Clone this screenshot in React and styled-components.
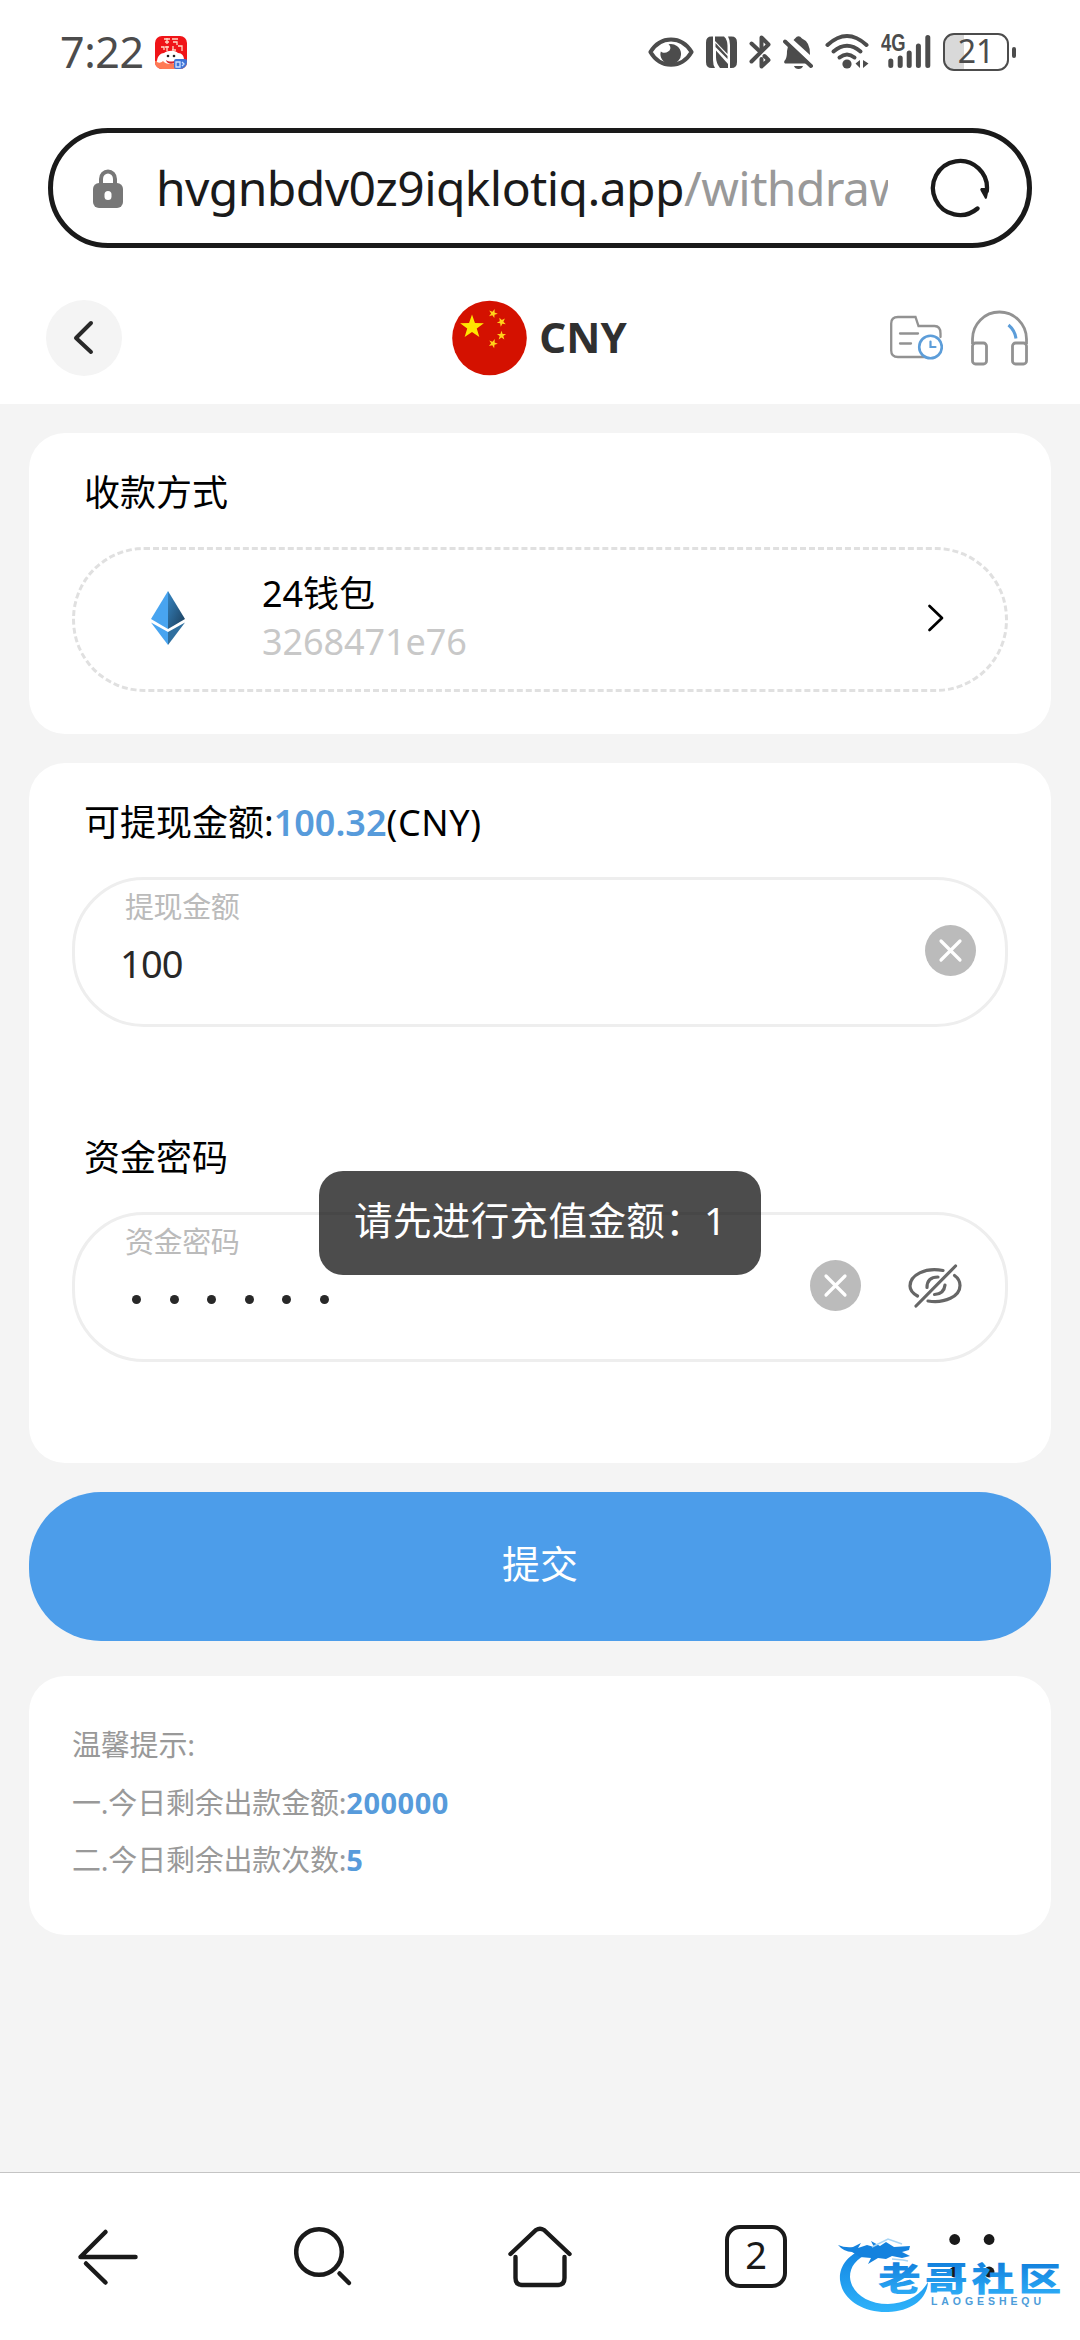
import React from 'react';
import styled, { createGlobalStyle } from 'styled-components';


const GlobalStyle = createGlobalStyle`
  * {
    box-sizing: border-box;
  }

  body {
    margin: 0;
    background: #f4f4f4;
    font-family: 'Noto Sans', 'Noto Sans CJK SC', sans-serif;
    color: #000;
  }

  svg {
    display: block;
    flex: none;
  }
`;

const Screen = styled.div`
  position: relative;
  display: flex;
  flex-direction: column;
  width: 1080px;
  height: 2340px;
  overflow: hidden;
  background: #f4f4f4;
`;

/* ---------- status bar ---------- */

const StatusBar = styled.div`
  display: flex;
  align-items: center;
  height: 104px;
  padding: 0 64px 0 60px;
  background: #fff;
  color: #4c4c4c;
`;

const Clock = styled.span`
  width: 95px;
  font-size: 43px;
  line-height: 50px;
  letter-spacing: -0.4px;
  white-space: nowrap;
`;

const StatusIcons = styled.div`
  display: flex;
  align-items: center;
  gap: 12px;
  margin-left: auto;
`;

const Signal = styled.div`
  position: relative;
`;

const NetworkType = styled.span`
  position: absolute;
  left: 0;
  top: 1px;
  font-family: 'Liberation Sans', sans-serif;
  font-size: 23px;
  font-weight: bold;
  line-height: 21px;
  transform: scaleX(0.8);
  transform-origin: left;
`;

const Battery = styled.div`
  display: flex;
  align-items: center;
  gap: 3px;
`;

const BatteryBody = styled.div`
  width: 66px;
  height: 38px;
  border: 2.5px solid #4c4c4c;
  border-radius: 11px;
  background: #fff linear-gradient(#d9d9d9, #d9d9d9) no-repeat left / ${(props) => props.$level}% 100%;
  font-size: 32px;
  line-height: 32px;
  text-align: center;
`;

const BatteryCap = styled.div`
  width: 4px;
  height: 11px;
  border-radius: 2px;
  background: #4c4c4c;
`;

/* ---------- browser ---------- */

const BrowserBar = styled.div`
  padding: 24px 48px 0;
  background: #fff;
`;

const AddressBox = styled.div`
  display: flex;
  align-items: center;
  height: 120px;
  padding: 0 37px 0 40px;
  border: 5px solid #1a1a1a;
  border-radius: 60px;
`;

const Address = styled.div`
  width: 732px;
  margin: -1px 42px 0 33px;
  overflow: hidden;
  white-space: nowrap;
  font-size: 48px;
  line-height: 70px;
  letter-spacing: -0.6px;
  color: #1a1a1a;
`;

const AddressPath = styled.span`
  color: #999;
`;

const BottomNav = styled.nav`
  display: grid;
  grid-template-columns: repeat(5, 1fr);
  align-items: center;
  justify-items: center;
  height: 168px;
  margin-top: auto;
  border-top: 1px solid #c4c4c4;
  background: #fff;
`;

const TabCount = styled.div`
  width: 62px;
  height: 63px;
  border: 4.5px solid #1a1a1a;
  border-radius: 15px;
  font-size: 38px;
  line-height: 51px;
  text-align: center;
  color: #1a1a1a;
`;

/* ---------- page header ---------- */

const Header = styled.header`
  display: grid;
  grid-template-columns: 1fr auto 1fr;
  align-items: center;
  height: 156px;
  padding: 24px 52px 0 46px;
  background: #fff;
`;

const BackButton = styled.button`
  display: flex;
  align-items: center;
  justify-content: center;
  width: 76px;
  height: 76px;
  padding: 0;
  border: 0;
  border-radius: 50%;
  background: #f4f4f4;
`;

const Currency = styled.div`
  display: flex;
  align-items: center;
  gap: 12px;
  padding-left: 5px;
  font-size: 42px;
  font-weight: 700;
  line-height: 60px;
  color: #303030;
`;

const CurrencyCode = styled.span`
  margin-top: -2px;
`;

const HeaderActions = styled.div`
  display: flex;
  align-items: center;
  justify-content: flex-end;
  gap: 28px;
`;

/* ---------- content ---------- */

const Content = styled.main`
  display: flex;
  flex-direction: column;
  padding: 29px 29px 0;
`;

const Card = styled.section`
  height: ${(props) => props.$height}px;
  margin-bottom: ${(props) => props.$gap || 0}px;
  padding: ${(props) => props.$padTop || 35}px 43px 0;
  border-radius: 36px;
  background: #fff;
`;

const Title = styled.h2`
  margin: 0 0 0 12px;
  font-size: 36px;
  font-weight: 400;
  line-height: 50px;
`;

const Amount = styled.span`
  font-weight: 600;
  color: #579bdb;
`;

const Unit = styled.span`
  letter-spacing: 0.6px;
`;

const WalletRow = styled.div`
  display: flex;
  align-items: center;
  height: 145px;
  margin-top: 29px;
  padding: 0 61px 3px 76px;
  border: 3px dashed #e0e0e0;
  border-radius: 72px;
`;

const WalletInfo = styled.div`
  flex: 1;
  margin-left: 77px;
  font-size: 36px;
  line-height: 48px;
  letter-spacing: -0.1px;
`;

const WalletNumber = styled.div`
  color: #c8c8c8;
`;

const Field = styled.div`
  display: flex;
  align-items: center;
  height: 150px;
  margin-top: 29px;
  margin-bottom: ${(props) => props.$gap || 0}px;
  padding: 0 ${(props) => props.$padRight}px 0 45px;
  border: 3px solid #eee;
  border-radius: 72px;
`;

const FieldText = styled.div`
  flex: 1;
  align-self: flex-start;
`;

const FieldLabel = styled.div`
  margin: 9px 0 0 5px;
  font-size: 29px;
  line-height: 36px;
  letter-spacing: -0.4px;
  color: #bbb;
`;

const FieldValue = styled.div`
  margin-top: 12px;
  font-size: 38px;
  line-height: 52px;
  letter-spacing: -0.8px;
  color: #282828;
`;

const PasswordDots = styled.div`
  display: flex;
  gap: 28.5px;
  margin: 35px 0 0 12px;
`;

const Dot = styled.span`
  width: 9px;
  height: 9px;
  border-radius: 50%;
  background: #282828;
`;

const FieldIcons = styled.div`
  display: flex;
  align-items: center;
  gap: 46px;
  margin-top: -3px;
`;

const SubmitButton = styled.button`
  height: 149px;
  margin-bottom: 35px;
  padding: 0 0 11px;
  border: 0;
  border-radius: 72px;
  background: #4c9dea;
  color: #fff;
  font-family: inherit;
  font-size: 38px;
`;

const TipLine = styled.p`
  margin: 0;
  font-size: 29px;
  line-height: 57.6px;
  letter-spacing: -0.2px;
  color: #999;
`;

const TipValue = styled.b`
  font-weight: 700;
  letter-spacing: 0.5px;
  color: #579bdb;
`;

const Toast = styled.div`
  position: absolute;
  left: 319px;
  top: 1171px;
  width: 442px;
  height: 104px;
  padding-left: 35px;
  border-radius: 24px;
  background: rgba(0, 0, 0, 0.7);
  color: #fff;
  font-size: 38.5px;
  line-height: 98px;
  letter-spacing: 0.4px;
  white-space: nowrap;
`;

const Watermark = styled.div`
  position: absolute;
  left: 836px;
  top: 2230px;
`;

/* ---------- icons ---------- */

const AppBadge = () => (
  <svg width="32" height="33" viewBox="0 0 32 33">
    <defs>
      <clipPath id="appClip"><rect width="32" height="33" rx="7" /></clipPath>
    </defs>
    <g clipPath="url(#appClip)">
      <rect width="32" height="33" fill="#f01418" />
      <path d="M0 25c10-2 22-2 32 1v7H0z" fill="#ff7a55" />
      <path d="M9 3h6M10 6h4M12 2v6M17 3h6M18 6h4v3M6 11h3v3M10 11h4M12 10v5M17 14h4M18 10v4M23 10h4v5" stroke="#ffd9c4" strokeWidth="1.3" fill="none" />
      <path d="M2 26c0-6 4-9 7-9 4-3 11-3 14 0 4 0 6 3 6 7-2 2-5 1-6 0-3 5-12 5-15 1-2 2-4 2-6 1z" fill="#fff" />
      <circle cx="13" cy="20" r="1.3" fill="#222" />
      <circle cx="19" cy="20" r="1.3" fill="#222" />
      <path d="M11 24c3 2 7 2 10 0-1 5-9 5-10 0z" fill="#d8232a" />
      <rect x="19" y="23" width="13" height="10" rx="2" fill="#3f74d6" />
      <path d="M21 26h4v5h-4zM27 26l2 2-2 2" stroke="#cfe0ff" strokeWidth="1.3" fill="none" />
    </g>
  </svg>
);

const EyeComfortIcon = () => (
  <svg width="46" height="40" viewBox="0 0 46 40">
    <path d="M2.4 20C7.5 11.5 14.5 7.4 23 7.4S38.5 11.5 43.6 20C38.5 28.6 31.5 32.8 23 32.8S7.5 28.6 2.4 20Z" fill="none" stroke="#4c4c4c" strokeWidth="4" strokeLinejoin="round" />
    <path d="M20.5 12.2A10.3 10 0 1 1 12.8 19.4C15.5 22 21.5 20.5 22.3 16.8 22.6 15 22 13.2 20.5 12.2Z" fill="#4c4c4c" />
  </svg>
);

const NfcIcon = () => (
  <svg width="31" height="40" viewBox="0 0 31 40">
    <path d="M7 4.600H5.500Q0 4.600 0 10.500V30Q0 36 5.500 36H9Q7 33 7 28Z" fill="#4c4c4c" />
    <path d="M9 4.600H18Q21.500 8 21.500 14V22L9 9Z" fill="#4c4c4c" />
    <path d="M9.500 11L21.500 24V27L9.500 15Z" fill="#4c4c4c" />
    <path d="M10 18.500L22 32V36H14Q10 31 10 25Z" fill="#4c4c4c" />
    <path d="M24 36H25.500Q31 36 31 30V10.500Q31 4.600 25.500 4.600H22Q24 8 24 13Z" fill="#4c4c4c" />
  </svg>
);

const BluetoothIcon = () => (
  <svg width="22" height="40" viewBox="0 0 22 40" fill="none" stroke="#4c4c4c" strokeWidth="4" strokeLinecap="round" strokeLinejoin="round">
    <path d="M2.500 11.500L11.500 20" />
    <path d="M12.500 17V5.500L19.500 12.500L2.500 29.500" />
    <path d="M12.500 27V34.500L19.500 28L15.500 24" />
  </svg>
);

const MutedBellIcon = () => (
  <svg width="30" height="40" viewBox="0 0 30 40">
    <path d="M12 6.500Q15.500 2 19 6.500Q27.500 10 27 23L10.500 8Z" fill="#4c4c4c" />
    <path d="M5.500 12L25 31.600H2Q0 30 2.500 27.600Q4 25 4 19Z" fill="#4c4c4c" />
    <path d="M2 9.500L28 34" stroke="#4c4c4c" strokeWidth="4" strokeLinecap="round" />
    <path d="M6 8L30 31" stroke="#fff" strokeWidth="1.800" />
    <path d="M11 34H20Q19 37 15.500 37T11 34Z" fill="#4c4c4c" />
  </svg>
);

const WifiIcon = () => (
  <svg width="44" height="40" viewBox="0 0 44 40" fill="none" stroke="#4c4c4c" strokeWidth="4" strokeLinecap="round">
    <path d="M2.500 13Q22 -5 41.500 13" />
    <path d="M8.500 19.500Q22 8 35.500 19.500" />
    <path d="M14.500 25.500Q22 19.500 29.500 25.500" />
    <circle cx="22" cy="32" r="4.600" fill="#4c4c4c" stroke="none" />
    <path d="M35 28V36L30.500 31.500ZM38 36V28L43.500 31.500Z" fill="#4c4c4c" stroke="none" />
  </svg>
);

const SignalIcon = () => (
  <svg width="50" height="40" viewBox="0 0 50 40" stroke="#4c4c4c" strokeWidth="5" strokeLinecap="round">
    <path d="M9.800 29V33.500M19.200 26V33.500M28.200 21V33.500M37.400 14V33.500M46.800 5.500V33.500" />
  </svg>
);

const LockIcon = () => (
  <svg width="30" height="39" viewBox="0 0 30 39">
    <path d="M8 16V10a7 7.500 0 0 1 14 0v6" fill="none" stroke="#777" strokeWidth="4" />
    <rect y="14" width="30" height="25" rx="6" fill="#777" />
    <rect x="11.500" y="22" width="7" height="9" rx="3.500" fill="#fff" />
  </svg>
);

const ReloadIcon = () => (
  <svg width="60" height="60" viewBox="0 0 60 60">
    <path d="M47.500 50.500A27 27 0 1 1 56.800 33" fill="none" stroke="#1a1a1a" strokeWidth="4.300" strokeLinecap="round" />
    <path d="M51 30Q49.500 31.500 50.800 33L55 40.500Q56.500 41.800 57 39.500L59 30Z" fill="#1a1a1a" />
  </svg>
);

const ChevronLeft = () => (
  <svg width="22" height="36" viewBox="0 0 22 36" fill="none" stroke="#282828" strokeWidth="4" strokeLinecap="round" strokeLinejoin="round">
    <path d="M18 3L3 18L18 32" />
  </svg>
);

const ChevronRight = () => (
  <svg width="17" height="30" viewBox="0 0 17 30" fill="none" stroke="#000" strokeWidth="2.700" strokeLinecap="round" strokeLinejoin="round">
    <path d="M2.500 3L15 15L2.500 27" />
  </svg>
);

const star = (cx, cy, r, turn) => {
  const points = [];
  for (let i = 0; i < 10; i++) {
    const radius = i % 2 ? r * 0.4 : r;
    const angle = ((turn + i * 36 - 90) * Math.PI) / 180;
    points.push(`${(cx + radius * Math.cos(angle)).toFixed(2)},${(cy + radius * Math.sin(angle)).toFixed(2)}`);
  }
  return points.join(' ');
};

const FlagIcon = () => (
  <svg width="75" height="76" viewBox="0 0 75 76">
    <circle cx="37.500" cy="38" r="37.300" fill="#d41100" />
    <g fill="#ffe600">
      <polygon points={star(20, 27, 12.5, 0)} />
      <polygon points={star(41, 13.5, 4.8, 20)} fill="#ffd21a" />
      <polygon points={star(49.5, 22, 4.8, 45)} fill="#ffd21a" />
      <polygon points={star(49.5, 35.5, 4.8, 0)} fill="#ffd21a" />
      <polygon points={star(41, 43.5, 4.8, 22)} fill="#ffd21a" />
    </g>
  </svg>
);

const RecordIcon = () => (
  <svg width="53" height="56" viewBox="0 0 53 56" fill="none" stroke="#929292" strokeWidth="2.300" strokeLinecap="round">
    <path d="M50.500 27V23.500Q50.500 16 44.500 16H28.500L25.500 7H8Q1.200 7 1.200 13.500V40.500Q1.200 47 8 47H36" />
    <path d="M10 23.500H28M10 33.500H21" />
    <circle cx="40.500" cy="37" r="11.300" stroke="#5c9dd9" strokeWidth="2.600" />
    <path d="M40.500 31.500V37H45.500" stroke="#5c9dd9" strokeWidth="2.200" />
  </svg>
);

const HeadsetIcon = () => (
  <svg width="57" height="56" viewBox="0 0 57 56" fill="none" stroke="#929292" strokeWidth="2.800">
    <path d="M1.500 34V29A27 27 0 0 1 55.500 29V34" />
    <rect x="1.500" y="33" width="14" height="21" rx="3" />
    <rect x="41.500" y="33" width="14" height="21" rx="3" />
    <path d="M37.500 15Q44 20.500 45 28.500" stroke="#5c9dd9" strokeWidth="3" />
  </svg>
);

const EthIcon = () => (
  <svg width="34" height="54" viewBox="0 0 34 54">
    <defs>
      <linearGradient id="ethDark" x1="0" y1="0" x2="1" y2="1">
        <stop offset="0" stopColor="#3585c2" />
        <stop offset="1" stopColor="#1b3c58" />
      </linearGradient>
    </defs>
    <path d="M17 0L0 28L17 38Z" fill="#48a4f0" />
    <path d="M17 0L34 28L17 38Z" fill="url(#ethDark)" />
    <path d="M0 31.500L17 41V54Z" fill="#48a4f0" />
    <path d="M34 31.500L17 41V54Z" fill="#2f6f9f" />
  </svg>
);

const ClearIcon = () => (
  <svg width="51" height="51" viewBox="0 0 51 51">
    <circle cx="25.500" cy="25.500" r="25.500" fill="#bbb" />
    <path d="M16 16L35 35M35 16L16 35" stroke="#fff" strokeWidth="3.200" strokeLinecap="round" />
  </svg>
);

const HiddenIcon = () => (
  <svg width="56" height="44" viewBox="0 0 56 44" fill="none" stroke="#666" strokeWidth="3.200" strokeLinecap="round">
    <path d="M36 6.500C18 3 3 11 3 22C3 26 6 29.500 10.500 32" />
    <path d="M47.500 11.500C51 14 53 17.500 53 21.500C53 32.500 38 39.500 21 37" />
    <path d="M31 13Q20 13 20 23.500M38 21Q37 30 27.500 30.500" />
    <path d="M48.500 2L9 42" />
  </svg>
);

const NavBackIcon = () => (
  <svg width="60" height="62" viewBox="0 0 60 62" stroke="#1a1a1a" strokeWidth="4.500" strokeLinecap="round" fill="none">
    <path d="M57.500 31H2.500L27.500 6" strokeLinejoin="round" />
    <path d="M8 37.500L27.500 56.500" />
  </svg>
);

const NavSearchIcon = () => (
  <svg width="60" height="62" viewBox="0 0 60 62" stroke="#1a1a1a" strokeWidth="4.500" strokeLinecap="round" fill="none">
    <circle cx="25" cy="26" r="22.800" />
    <path d="M45.500 47.500L55 57" />
  </svg>
);

const NavHomeIcon = () => (
  <svg width="64" height="62" viewBox="0 0 64 62" stroke="#1a1a1a" strokeWidth="4.400" strokeLinecap="round" fill="none">
    <path d="M2.500 28L28 4Q32 1.500 36 4L61.500 28" />
    <path d="M7.500 31V52Q7.500 59 14 59H50Q56.500 59 56.500 52V31" />
  </svg>
);

const NavMoreIcon = () => (
  <svg width="62" height="62" viewBox="0 0 62 62" fill="#1a1a1a">
    <circle cx="13.700" cy="13.500" r="5.400" />
    <circle cx="48.100" cy="13.500" r="5.400" />
    <circle cx="13.700" cy="46" r="5.400" />
    <circle cx="48.100" cy="46" r="5.400" />
  </svg>
);

const WatermarkLogo = () => (
  <svg width="228" height="90" viewBox="0 0 228 90">
    <defs>
      <linearGradient id="wave" gradientUnits="userSpaceOnUse" x1="0" y1="12" x2="0" y2="84">
        <stop offset="0" stopColor="#0f7fdf" />
        <stop offset="1" stopColor="#2fb4fb" />
      </linearGradient>
      <linearGradient id="name" gradientUnits="userSpaceOnUse" x1="0" y1="-30" x2="0" y2="4">
        <stop offset="0" stopColor="#127fdc" />
        <stop offset="1" stopColor="#2cabf6" />
      </linearGradient>
    </defs>
    <path d="M31 18C11 24 3 37 4 50C6 70 28 83 52 82C76 81 91 69 92 52C84 66 70 73 52 74C30 74 15 62 14 47C14 37 20 28 34 23Z" fill="url(#wave)" />
    <path d="M2 15Q9 18 17 17L25 13L22 18L31 15L38 17L35 11L44 16L50 12L58 17L74 16L73 20L66 22L74 26L66 28L56 26L50 29L42 28L32 34L35 28L24 27L16 22Q8 22 2 15Z" fill="#1482de" />
    <path d="M56 29L67 30L72 31M36 17L52 9L66 14" stroke="#a8d5f4" strokeWidth="1.500" fill="none" />
    <text transform="translate(42 61) scale(1.300 1)" fontFamily="'Noto Sans CJK SC', sans-serif" fontWeight="900" fontSize="33" letterSpacing="3" fill="url(#name)">老哥社区</text>
    <text x="95" y="74.500" textLength="110" fontFamily="'Liberation Sans', sans-serif" fontWeight="bold" fontSize="10.500" fill="#4d9cd9">LAOGESHEQU</text>
  </svg>
);

/* ---------- page ---------- */

const App = () => {
  return (
    <>
      <GlobalStyle />
      <Screen>
        <StatusBar>
          <Clock>7:22</Clock>
          <AppBadge />
          <StatusIcons>
            <EyeComfortIcon />
            <NfcIcon />
            <BluetoothIcon />
            <MutedBellIcon />
            <WifiIcon />
            <Signal>
              <NetworkType>4G</NetworkType>
              <SignalIcon />
            </Signal>
            <Battery>
              <BatteryBody $level={31}>21</BatteryBody>
              <BatteryCap />
            </Battery>
          </StatusIcons>
        </StatusBar>

        <BrowserBar>
          <AddressBox>
            <LockIcon />
            <Address>
              hvgnbdv0z9iqklotiq.app<AddressPath>/withdraw</AddressPath>
            </Address>
            <ReloadIcon />
          </AddressBox>
        </BrowserBar>

        <Header>
          <BackButton><ChevronLeft /></BackButton>
          <Currency>
            <FlagIcon />
            <CurrencyCode>CNY</CurrencyCode>
          </Currency>
          <HeaderActions>
            <RecordIcon />
            <HeadsetIcon />
          </HeaderActions>
        </Header>

        <Content>
          <Card $height={301} $gap={29}>
            <Title>收款方式</Title>
            <WalletRow>
              <EthIcon />
              <WalletInfo>
                <div>24钱包</div>
                <WalletNumber>3268471e76</WalletNumber>
              </WalletInfo>
              <ChevronRight />
            </WalletRow>
          </Card>

          <Card $height={700} $gap={29}>
            <Title>可提现金额:<Amount>100.32</Amount><Unit>(CNY)</Unit></Title>
            <Field $padRight={29} $gap={106}>
              <FieldText>
                <FieldLabel>提现金额</FieldLabel>
                <FieldValue>100</FieldValue>
              </FieldText>
              <FieldIcons><ClearIcon /></FieldIcons>
            </Field>

            <Title>资金密码</Title>
            <Field $padRight={42}>
              <FieldText>
                <FieldLabel>资金密码</FieldLabel>
                <PasswordDots>
                  {[1, 2, 3, 4, 5, 6].map((n) => <Dot key={n} />)}
                </PasswordDots>
              </FieldText>
              <FieldIcons>
                <ClearIcon />
                <HiddenIcon />
              </FieldIcons>
            </Field>
          </Card>

          <SubmitButton>提交</SubmitButton>

          <Card $height={259} $padTop={40}>
            <TipLine>温馨提示:</TipLine>
            <TipLine>一.今日剩余出款金额:<TipValue>200000</TipValue></TipLine>
            <TipLine>二.今日剩余出款次数:<TipValue>5</TipValue></TipLine>
          </Card>
        </Content>

        <BottomNav>
          <NavBackIcon />
          <NavSearchIcon />
          <NavHomeIcon />
          <TabCount>2</TabCount>
          <NavMoreIcon />
        </BottomNav>

        <Toast>请先进行充值金额：1</Toast>
        <Watermark><WatermarkLogo /></Watermark>
      </Screen>
    </>
  );
}

export default App;
